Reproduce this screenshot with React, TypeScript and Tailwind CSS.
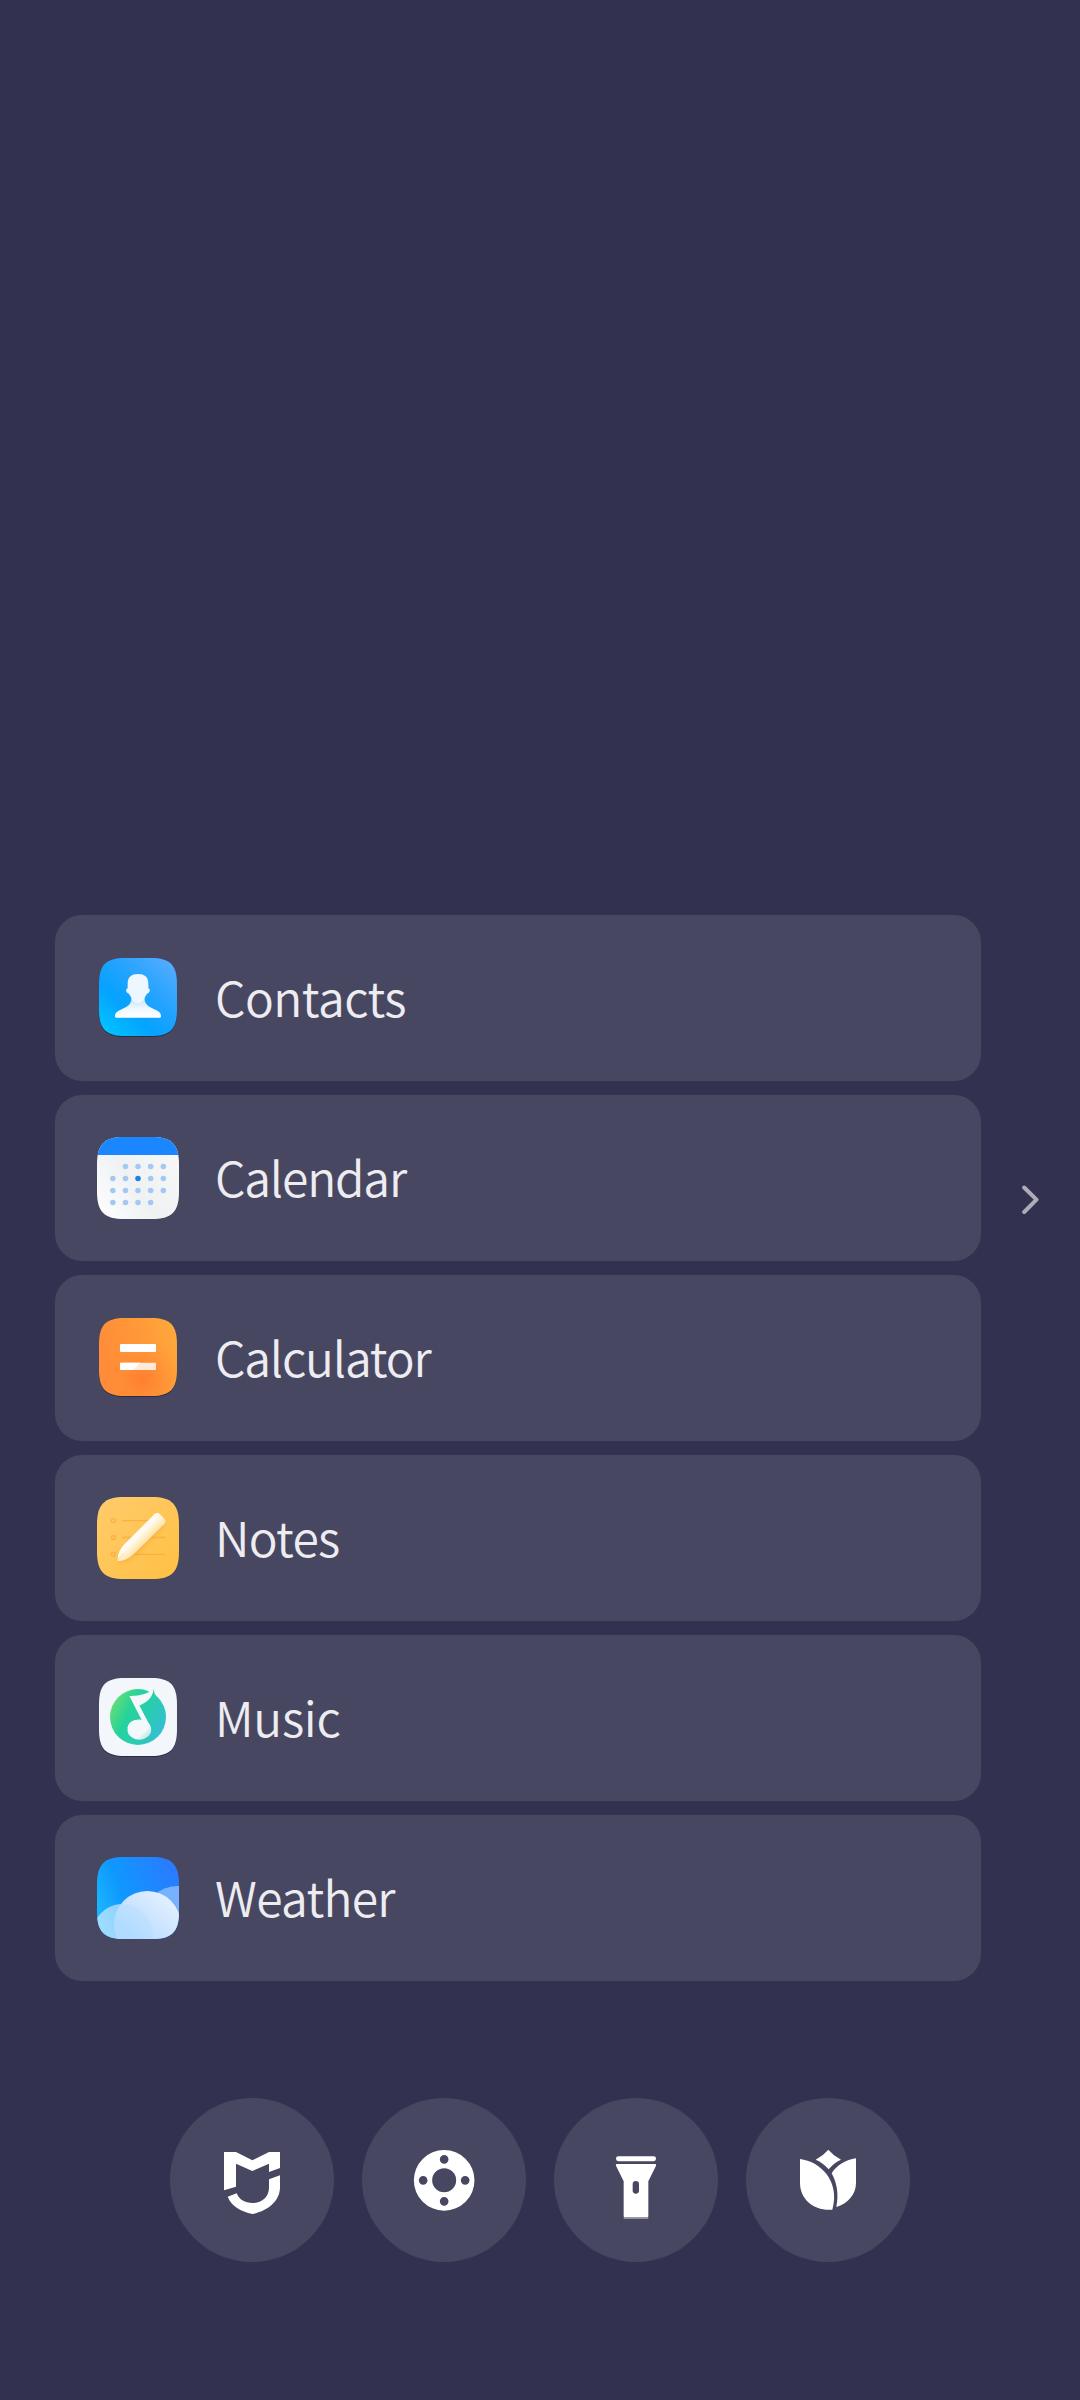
import type { ReactNode } from "react";

const squircle =
  "M0 82C0 22 22 0 82 0H164C224 0 246 22 246 82V164C246 224 224 246 164 246H82C22 246 0 224 0 164Z";

function AppIcon({ children }: { children: ReactNode }) {
  return (
    <svg viewBox="0 0 246 246" className="w-[82px] h-[82px] flex-shrink-0 overflow-visible">
      {children}
    </svg>
  );
}

// Slightly inset tile with a thin shadow under it
function Tile({ fill }: { fill: string }) {
  return (
    <>
      <path d={squircle} fill="#1d1c38" opacity="0.65" transform="translate(6 6) scale(0.951)" />
      <path d={squircle} fill={fill} transform="translate(6 3) scale(0.951)" />
    </>
  );
}

function ContactsIcon() {
  return (
    <AppIcon>
      <defs>
        <linearGradient id="contacts-bg" x1="0.05" y1="1" x2="0.95" y2="0">
          <stop offset="0" stopColor="#00c8ff" />
          <stop offset="0.35" stopColor="#06a2ff" />
          <stop offset="0.6" stopColor="#22a3ff" />
          <stop offset="1" stopColor="#59adff" />
        </linearGradient>
        <linearGradient id="contacts-body" x1="0" y1="0" x2="0" y2="1">
          <stop offset="0" stopColor="#b5dcff" />
          <stop offset="0.6" stopColor="#f1f8ff" />
          <stop offset="1" stopColor="#ffffff" />
        </linearGradient>
      </defs>
      <Tile fill="url(#contacts-bg)" />
      <path
        d="M104 115C104 142 96 146 76 156C62 162 54 167 54 177C54 181 56 182.500 60 182.500H186C190 182.500 192 181 192 177C192 167 184 162 170 156C150 146 142 142 142 115Z"
        fill="url(#contacts-body)"
      />
      <path
        d="M123 51C102 51 92 61 92 80V94C86 94 86 106 93 109C96 109 97 114 102 120C105 132 113 138 123 138C133 138 141 132 144 120C149 114 150 109 153 109C160 106 160 94 154 94V80C154 61 144 51 123 51Z"
        fill="#ecf7ff"
      />
    </AppIcon>
  );
}

const dotRows = [
  { y: 88.5, xs: [85.5, 123, 161, 199] },
  { y: 124.5, xs: [47.5, 85.5, 123, 161, 199] },
  { y: 160.5, xs: [47.5, 85.5, 123, 161, 199] },
  { y: 196.5, xs: [47.5, 85.5, 123, 161] },
];

function CalendarIcon() {
  return (
    <AppIcon>
      <defs>
        <linearGradient id="calendar-bg" x1="0" y1="1" x2="1" y2="0.3">
          <stop offset="0" stopColor="#ffffff" />
          <stop offset="0.5" stopColor="#eff1f3" />
          <stop offset="1" stopColor="#f7f7f8" />
        </linearGradient>
        <clipPath id="calendar-clip">
          <path d={squircle} />
        </clipPath>
      </defs>
      <g clipPath="url(#calendar-clip)">
        <rect width="246" height="246" fill="url(#calendar-bg)" />
        <rect width="246" height="54" fill="#1a86ff" />
      </g>
      {dotRows.map((row) =>
        row.xs.map((x) => (
          <circle
            key={`${x}-${row.y}`}
            cx={x}
            cy={row.y}
            r="8.3"
            fill={x === 123 && row.y === 124.5 ? "#1f7ee6" : "#a3c9f2"}
          />
        ))
      )}
    </AppIcon>
  );
}

function CalculatorIcon() {
  return (
    <AppIcon>
      <defs>
        <linearGradient id="calc-bg" x1="0" y1="0.4" x2="1" y2="0">
          <stop offset="0" stopColor="#ff8c38" />
          <stop offset="0.5" stopColor="#ff9838" />
          <stop offset="1" stopColor="#ffab3b" />
        </linearGradient>
        <radialGradient id="calc-glow" cx="0.55" cy="0.78" r="0.5">
          <stop offset="0" stopColor="#ff7f30" />
          <stop offset="1" stopColor="#ff8f35" stopOpacity="0" />
        </radialGradient>
      </defs>
      <Tile fill="url(#calc-bg)" />
      <path d={squircle} fill="url(#calc-glow)" transform="translate(6 3) scale(0.951)" />
      <rect x="69" y="81" width="108" height="24" rx="3" fill="#fff" />
      <rect x="69" y="137" width="108" height="22" rx="3" fill="#ffe9da" />
      <path d="M72 137H130L108 159H72Q69 159 69 156V140Q69 137 72 137Z" fill="#fff" />
    </AppIcon>
  );
}

function NotesIcon() {
  return (
    <AppIcon>
      <defs>
        <linearGradient id="notes-bg" x1="0" y1="0" x2="1" y2="1">
          <stop offset="0" stopColor="#ffcb6c" />
          <stop offset="1" stopColor="#ffc043" />
        </linearGradient>
        <linearGradient id="notes-pen" gradientUnits="userSpaceOnUse" x1="115" y1="98" x2="149" y2="132">
          <stop offset="0" stopColor="#ffffff" />
          <stop offset="0.4" stopColor="#fffaf0" />
          <stop offset="1" stopColor="#ffe3a6" />
        </linearGradient>
        <filter id="notes-blur" x="-20%" y="-20%" width="140%" height="140%">
          <feGaussianBlur stdDeviation="6" />
        </filter>
      </defs>
      <path d={squircle} fill="url(#notes-bg)" />
      <g fill="none" stroke="#fcb040" strokeWidth="4">
        {[71, 121.5, 172].map((y) => (
          <g key={y}>
            <circle cx="49" cy={y} r="6" />
            <path d={`M77 ${y}H204`} strokeLinecap="round" />
          </g>
        ))}
      </g>
      <path
        d="M170 62L78 155Q66 170 66 198Q98 194 115 178L206 82Z"
        fill="#f5a02a"
        opacity="0.5"
        filter="url(#notes-blur)"
      />
      <path
        d="M172 52Q180 44 188 51L203 66Q209 73 202 81L110 172Q90 191 66 192Q60 192 62 185Q64 160 82 142Z"
        fill="url(#notes-pen)"
      />
      <path d="M62 190Q72 178 80 170" stroke="#ffdb93" strokeWidth="3" fill="none" />
    </AppIcon>
  );
}

function MusicIcon() {
  return (
    <AppIcon>
      <defs>
        <linearGradient id="music-bg" gradientUnits="userSpaceOnUse" x1="43" y1="80" x2="207" y2="162">
          <stop offset="0" stopColor="#66dd77" />
          <stop offset="0.32" stopColor="#25d39a" />
          <stop offset="0.65" stopColor="#2bcbb4" />
          <stop offset="1" stopColor="#35bcd8" />
        </linearGradient>
        <linearGradient id="music-head" x1="0.3" y1="0.3" x2="1" y2="0.9">
          <stop offset="0.5" stopColor="#f2f8fb" />
          <stop offset="1" stopColor="#a9e2d8" />
        </linearGradient>
      </defs>
      <Tile fill="#f3f7fb" />
      <circle cx="123" cy="120" r="84" fill="url(#music-bg)" />
      <path d="M171 36Q170 49 178 57L158 66L150 52Z" fill="url(#music-bg)" />
      <path d="M97 57Q144 58 170 36C167 62 150 76 127 86L159 146L139 139Z" fill="#f5f9fc" />
      <path d="M154 42Q163 43 171 32V36L160 48Z" fill="#f3f7fb" />
      <ellipse cx="127" cy="158" rx="35.500" ry="30.500" fill="url(#music-head)" />
      <path d="M127 86L162 154L140 134Z" fill="#f5f9fc" />
      <ellipse cx="123" cy="151" rx="31" ry="23" fill="#f3f8fb" />
    </AppIcon>
  );
}

function WeatherIcon() {
  return (
    <AppIcon>
      <defs>
        <linearGradient id="weather-bg" x1="0" y1="0.7" x2="1" y2="0.3">
          <stop offset="0" stopColor="#1ab8ff" />
          <stop offset="0.35" stopColor="#0f98ff" />
          <stop offset="1" stopColor="#2a7bff" />
        </linearGradient>
        <linearGradient id="weather-left" x1="0" y1="0.5" x2="0.9" y2="0.2">
          <stop offset="0" stopColor="#a2e4ff" />
          <stop offset="1" stopColor="#7cc6ff" />
        </linearGradient>
        <linearGradient id="weather-front" x1="0.2" y1="0.6" x2="0.7" y2="0">
          <stop offset="0" stopColor="#b3deff" />
          <stop offset="0.5" stopColor="#cde5ff" />
          <stop offset="1" stopColor="#e2f0ff" />
        </linearGradient>
        <clipPath id="weather-clip">
          <path d={squircle} />
        </clipPath>
      </defs>
      <g clipPath="url(#weather-clip)">
        <rect width="246" height="246" fill="url(#weather-bg)" />
        <circle cx="241" cy="188" r="101" fill="#76b2ff" />
        <circle cx="77" cy="232" r="91" fill="url(#weather-left)" />
        <circle cx="151" cy="202" r="100" fill="url(#weather-front)" />
        <circle cx="77" cy="232" r="91" fill="#a8d9ff" opacity="0.2" />
      </g>
    </AppIcon>
  );
}

const apps = [
  { name: "Contacts", icon: <ContactsIcon />, tracking: "tracking-[-0.5px]" },
  { name: "Calendar", icon: <CalendarIcon />, tracking: "tracking-[-1.2px]" },
  { name: "Calculator", icon: <CalculatorIcon />, tracking: "tracking-[-1.2px]" },
  { name: "Notes", icon: <NotesIcon />, tracking: "tracking-[-0.7px]" },
  { name: "Music", icon: <MusicIcon />, tracking: "tracking-[-0.3px]" },
  { name: "Weather", icon: <WeatherIcon />, tracking: "tracking-[-0.7px]" },
];

const shortcuts = [
  {
    label: "Mi Home",
    icon: (
      <>
        <path d="M12 12H48L97 37L147 12H180V60L147 72V47L97 69L48 47V116L12 127Z" />
        <path d="M23 146L50 136C58 156 75 165 97 165C127 165 147 147 147 118V94L180 82V118C180 160 142 190 97 198C62 190 35 175 23 146Z" />
      </>
    ),
  },
  {
    label: "Remote",
    icon: (
      <path
        fillRule="evenodd"
        transform="translate(0.5 0)"
        d="M96 6a91 91 0 1 0 0 182a91 91 0 1 0 0-182ZM96 61a36 36 0 1 1 0 72a36 36 0 1 1 0-72ZM96 21a13 13 0 1 1 0 26a13 13 0 1 1 0-26ZM96 147a13 13 0 1 1 0 26a13 13 0 1 1 0-26ZM33 84a13 13 0 1 1 0 26a13 13 0 1 1 0-26ZM159 84a13 13 0 1 1 0 26a13 13 0 1 1 0-26Z"
      />
    ),
  },
  {
    label: "Flashlight",
    icon: (
      <>
        <rect x="36" y="24.500" width="120" height="15" rx="7" />
        <path
          fillRule="evenodd"
          d="M38 48H154Q158 48 156 53L133 100V205Q133 208 130 208H62Q59 208 59 205V100L36 53Q34 48 38 48ZM86 108.500V127.500A9.500 9.500 0 0 0 105 127.500V108.500A9.500 9.500 0 0 0 86 108.500Z"
        />
        <rect x="59" y="208" width="74" height="5" opacity="0.4" />
      </>
    ),
  },
  {
    label: "Wallpaper",
    icon: (
      <>
        <path d="M97 5Q113 24 135 35Q113 45 98 64Q82 45 59 35Q81 24 97 5Z" />
        <path d="M12 33C72 40 133 98 109 185C55 190 12 155 12 105Z" />
        <path d="M180 31C150 35 122 52 107 76C123 105 129 140 121 177C155 167 180 140 180 105Z" />
      </>
    ),
  },
];

export default function App() {
  return (
    <main className="w-[1080px] h-[2400px] bg-[#333150] pt-[915px] font-['Noto_Sans_CJK_SC','Noto_Sans',sans-serif] overflow-hidden">
      <div className="flex items-start pl-[55px]">
        <ul className="flex flex-col gap-3.5 w-[926px]">
          {apps.map((app) => (
            <li
              key={app.name}
              className="flex items-center h-[166px] pl-[42px] rounded-[27px] bg-[#484762]"
            >
              {app.icon}
              <span className={`ml-9 pb-1 text-[48px] leading-none font-[350] text-[#edecf0] ${app.tracking}`}>
                {app.name}
              </span>
            </li>
          ))}
        </ul>
        <button aria-label="Next" className="mt-[270px] ml-[39px]">
          <svg viewBox="0 0 20 30" className="w-5 h-[30px]" fill="none" stroke="#adacb9" strokeWidth="4" strokeLinecap="round" strokeLinejoin="round">
            <path d="M4.200 2.500L16.500 14.700L4.200 27" />
          </svg>
        </button>
      </div>

      <div className="flex justify-center gap-7 mt-[117px]">
        {shortcuts.map((item) => (
          <button
            key={item.label}
            aria-label={item.label}
            className="flex items-center justify-center w-[164px] h-[164px] rounded-full bg-[#484762]"
          >
            <svg viewBox="-12 -12 216 216" className="w-[72px] h-[72px] overflow-visible" fill="#fff">
              {item.icon}
            </svg>
          </button>
        ))}
      </div>
    </main>
  );
}
